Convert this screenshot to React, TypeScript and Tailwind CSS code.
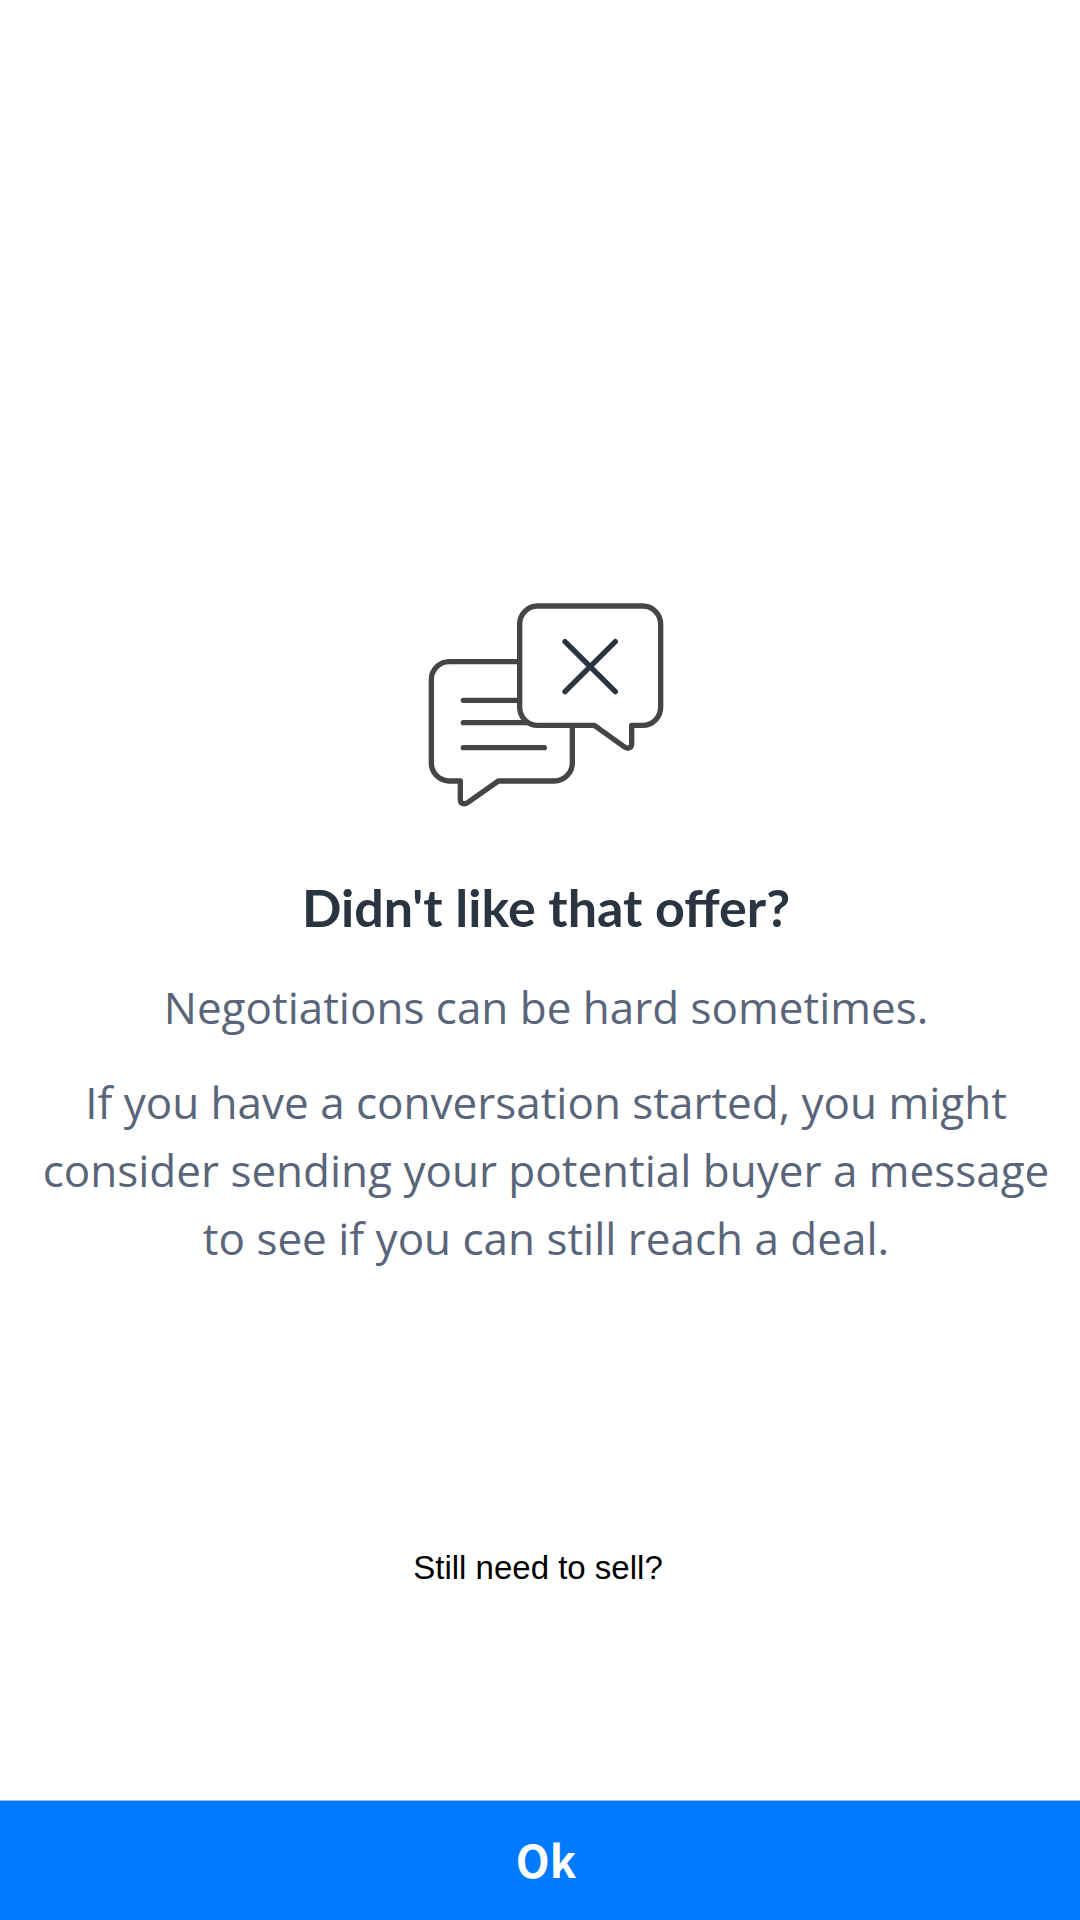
function OfferDeclinedIcon() {
  return (
    <svg
      viewBox="54 38 708 612"
      className="h-[204px] w-[236px]"
      fill="none"
      stroke="#444545"
      strokeWidth="16"
      strokeLinecap="round"
      strokeLinejoin="round"
      aria-hidden="true"
    >
      <path
        fill="#fff"
        d="M118 214H433A54 54 0 0 1 487 268V518A54 54 0 0 1 433 572H265L174 636Q167 641 160 640Q151 638 151 628V572H118A54 54 0 0 1 64 518V268A54 54 0 0 1 118 214Z"
      />
      <path d="M160 330H340M160 397H350M160 472H403" />
      <path
        fill="#fff"
        d="M383 47H698A54 54 0 0 1 752 101V351A54 54 0 0 1 698 405H665V461Q665 471 656 473Q649 474 642 469L553 405H383A54 54 0 0 1 329 351V101A54 54 0 0 1 383 47Z"
      />
      <path stroke="#2b3542" d="M465 154L616 304M616 154L465 304" />
    </svg>
  );
}

export default function App() {
  return (
    <div className="flex min-h-screen flex-col bg-white">
      <main className="flex flex-1 flex-col items-center pt-[603px] text-center">
        <section className="flex w-full flex-col items-center pr-1 pl-4">
          <OfferDeclinedIcon />
          <h1 className="mt-[68px] font-['Lato',sans-serif] text-[52px] leading-[64px] font-bold text-[#2b3542]">
            Didn't like that offer?
          </h1>
          <div className="mt-[34px] flex flex-col gap-[27px] font-['Open_Sans',sans-serif] text-[44px] leading-[68px] text-[#596579]">
            <p>Negotiations can be hard sometimes.</p>
            <p>
              If you have a conversation started, you might
              <br />
              consider sending your potential buyer a message
              <br />
              to see if you can still reach a deal.
            </p>
          </div>
        </section>
        <p className="mt-[272px] pr-1 font-['Liberation_Sans',sans-serif] text-[33px] leading-[48px] text-black">
          Still need to sell?
        </p>
      </main>
      <button
        type="button"
        className="h-[120px] w-full border-t border-[#8fc4f5] bg-[#007aff] pb-1 pl-3 font-['Noto_Sans_CJK_JP',sans-serif] text-[44px] font-bold text-white"
      >
        Ok
      </button>
    </div>
  );
}
